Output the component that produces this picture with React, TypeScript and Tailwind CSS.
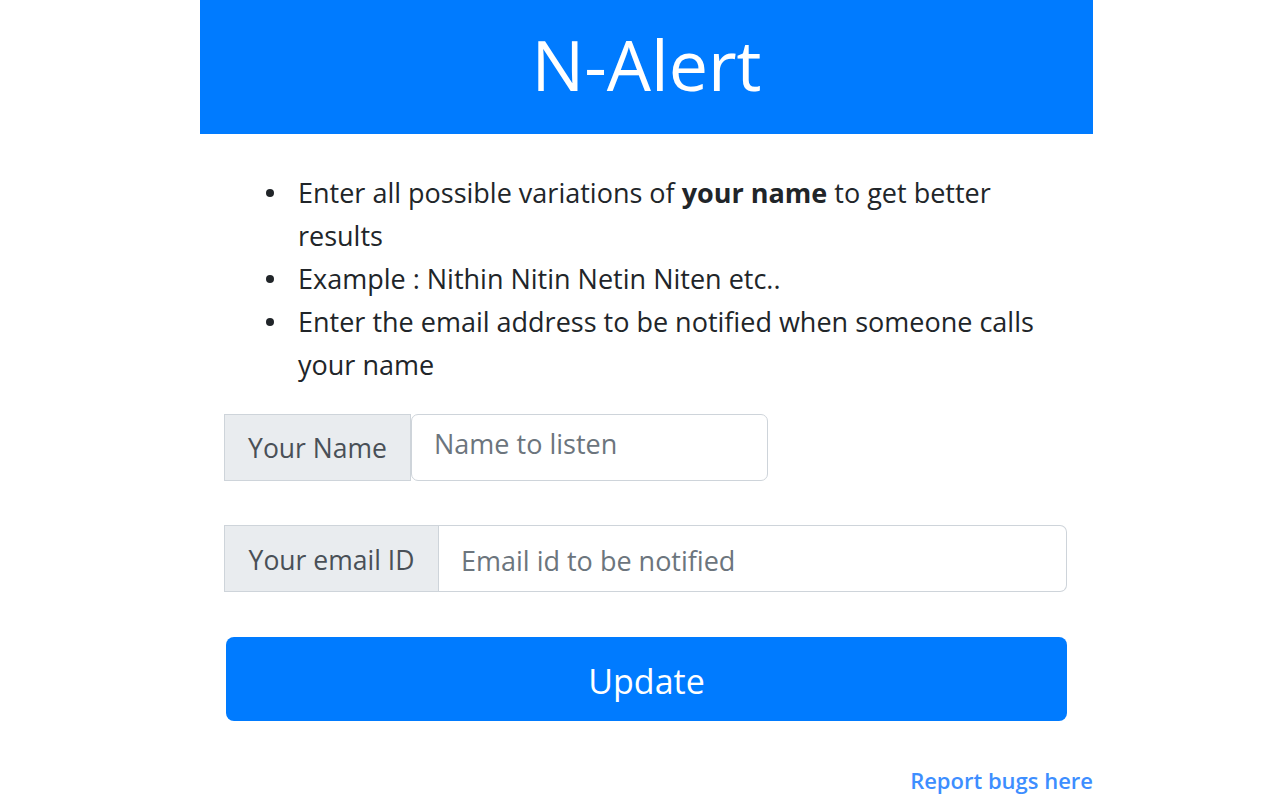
import React from "react";

function Item({ children }: { children: React.ReactNode }) {
  return (
    <li className="flex">
      <span className="mr-[24px] mt-[18px] h-[8px] w-[8px] shrink-0 rounded-full bg-[#212529]" />
      <span>{children}</span>
    </li>
  );
}

export default function App() {
  const font = { fontFamily: '"Open Sans", "Noto Sans", sans-serif' };
  return (
    <div className="min-h-[800px] bg-white text-[#212529]" style={font}>
      <div className="ml-[200px] w-[893px]">
        <div className="flex h-[134px] items-center justify-center bg-[#007bff] pb-[6px]">
          <h1 className="text-[70px] font-normal leading-none text-white">N-Alert</h1>
        </div>
        <div className="pl-[24px] pr-[26px]">
          <ul className="mt-[37px] pl-[42px] pr-[6px] text-[27px] leading-[43px]">
            <Item>
              Enter all possible variations of <b>your name</b> to get better results
            </Item>
            <Item>Example : Nithin Nitin Netin Niten etc..</Item>
            <Item>Enter the email address to be notified when someone calls your name</Item>
          </ul>
          <div className="mt-[28px] flex h-[67px]">
            <div className="flex w-[187px] items-center justify-center border border-[#ced4da] bg-[#e9ecef] pt-[3px] text-[26.5px] text-[#495057]">
              Your Name
            </div>
            <div className="flex w-[357px] items-start rounded-[7px] border border-[#ced4da] px-[22px] pt-[9px] text-[27px] text-[#6c757d]">
              Name to listen
            </div>
          </div>
          <div className="mt-[44px] flex h-[67px]">
            <div className="flex w-[215px] items-center justify-center border border-[#ced4da] bg-[#e9ecef] pt-[5px] text-[26.5px] text-[#495057]">
              Your email ID
            </div>
            <div className="flex flex-1 items-center rounded-r-[7px] border border-l-0 border-[#ced4da] px-[22px] pt-[5px] text-[27px] text-[#6c757d]">
              Email id to be notified
            </div>
          </div>
          <div className="mt-[45px] pl-[2px]">
            <button className="flex h-[84px] w-full items-center justify-center rounded-[8px] bg-[#007bff] pt-[4px] text-[34px] text-white">
              Update
            </button>
          </div>
        </div>
        <div className="mt-[43px] text-right text-[22px] font-semibold text-[#3d8eff]">Report bugs here</div>
      </div>
    </div>
  );
}
